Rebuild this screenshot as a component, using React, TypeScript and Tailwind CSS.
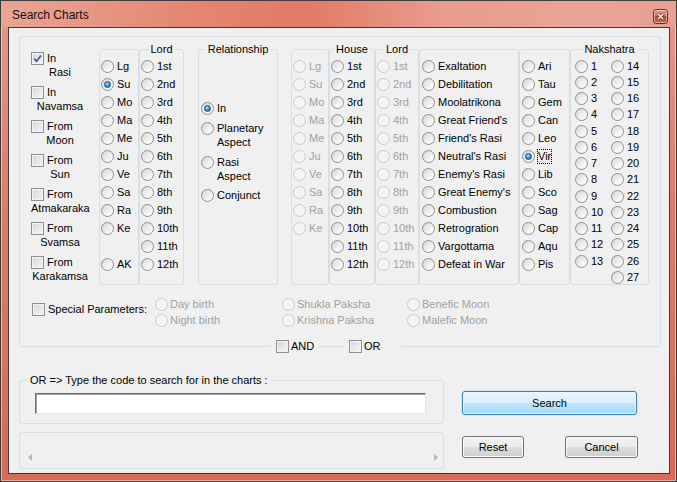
import type { ReactNode } from 'react';

const PLANETS = ['Lg', 'Su', 'Mo', 'Ma', 'Me', 'Ju', 'Ve', 'Sa', 'Ra', 'Ke'];
const ORDINALS = ['1st', '2nd', '3rd', '4th', '5th', '6th', '7th', '8th', '9th', '10th', '11th', '12th'];
const CONDITIONS = [
  'Exaltation',
  'Debilitation',
  'Moolatrikona',
  "Great Friend's",
  "Friend's Rasi",
  "Neutral's Rasi",
  "Enemy's Rasi",
  "Great Enemy's",
  'Combustion',
  'Retrogration',
  'Vargottama',
  'Defeat in War',
];
const SIGNS = ['Ari', 'Tau', 'Gem', 'Can', 'Leo', 'Vir', 'Lib', 'Sco', 'Sag', 'Cap', 'Aqu', 'Pis'];
const NAK_LEFT = Array.from({ length: 13 }, (_, i) => String(i + 1));
const NAK_RIGHT = Array.from({ length: 14 }, (_, i) => String(i + 14));

const CHART_CHECKS: { first: string; second: string; checked?: boolean }[] = [
  { first: 'In', second: 'Rasi', checked: true },
  { first: 'In', second: 'Navamsa' },
  { first: 'From', second: 'Moon' },
  { first: 'From', second: 'Sun' },
  { first: 'From', second: 'Atmakaraka' },
  { first: 'From', second: 'Svamsa' },
  { first: 'From', second: 'Karakamsa' },
];

function Radio({ checked = false, disabled = false }: { checked?: boolean; disabled?: boolean }) {
  return (
    <span
      className={`flex h-[13px] w-[13px] shrink-0 items-center justify-center rounded-full border ${
        disabled
          ? 'border-[#cacaca] bg-[#f4f4f4]'
          : 'border-[#8e8f8f] bg-[linear-gradient(135deg,#d6d6d6,#f4f4f4_65%,#ffffff)]'
      }`}
    >
      {checked && (
        <span className="h-[7px] w-[7px] rounded-full border border-[#1c4c7e] bg-[radial-gradient(circle_at_40%_35%,#b4e2fb,#3489cf_55%,#1a5592)]" />
      )}
    </span>
  );
}

function Check({ checked = false }: { checked?: boolean }) {
  return (
    <span className="flex h-[13px] w-[13px] shrink-0 items-center justify-center border border-[#8e8f8f] bg-[linear-gradient(135deg,#d2d6dc,#f6f6f6)] shadow-[inset_0_0_0_1px_#f4f4f4]">
      {checked && (
        <svg width="9" height="9" viewBox="0 0 9 9">
          <path d="M1.2 4.6 L3.6 7.2 L8 1.4" stroke="#3b5a96" strokeWidth="1.7" fill="none" />
        </svg>
      )}
    </span>
  );
}

function RadioRow({
  label,
  checked,
  disabled,
  focused,
  rowClass = 'h-[18px] gap-[3px]',
}: {
  label: string;
  checked?: boolean;
  disabled?: boolean;
  focused?: boolean;
  rowClass?: string;
}) {
  return (
    <div className={`flex items-center whitespace-nowrap ${rowClass}`}>
      <Radio checked={checked} disabled={disabled} />
      {focused ? (
        <span className="-ml-px border border-dotted border-black px-0 leading-[13px]">{label}</span>
      ) : (
        <span className={disabled ? 'text-[#a0a0a0]' : ''}>{label}</span>
      )}
    </div>
  );
}

/** Windows-style group box; the title sits over the top border. */
function GroupBox({
  title,
  align = 'center',
  className = '',
  children,
}: {
  title?: string;
  align?: 'center' | 'left';
  className?: string;
  children?: ReactNode;
}) {
  return (
    <div className={`relative shrink-0 rounded-[3px] border border-[#d5dfe5] ${className}`}>
      {title && (
        <span
          className={`absolute -top-[7px] whitespace-nowrap bg-[#f0f0f0] px-[2px] leading-[13px] ${
            align === 'center' ? 'left-1/2 -translate-x-1/2' : 'left-[8px]'
          }`}
        >
          {title}
        </span>
      )}
      {children}
    </div>
  );
}

function WinButton({ label, className = '', primary = false }: { label: string; className?: string; primary?: boolean }) {
  return (
    <button
      className={`flex items-center justify-center rounded-[3px] border leading-[13px] ${
        primary
          ? 'border-[#3c7fb1] bg-[linear-gradient(#eaf6fd,#d9f0fc_50%,#bee6fd_50%,#a7d9f5)] shadow-[inset_0_0_0_1px_#e8f7ff,0_0_2px_#8fd0f5]'
          : 'border-[#707070] bg-[linear-gradient(#f2f2f2,#ebebeb_50%,#dddddd_50%,#cfcfcf)] shadow-[inset_0_0_0_1px_#fbfbfb]'
      } ${className}`}
    >
      {label}
    </button>
  );
}

function Arrow({ dir }: { dir: 'left' | 'right' }) {
  return (
    <svg width="4" height="7" viewBox="0 0 4 7">
      <polygon points={dir === 'left' ? '4,0 0,3.5 4,7' : '0,0 4,3.5 0,7'} fill="#b5b5b5" />
    </svg>
  );
}

export default function App() {
  return (
    <div className="flex h-[482px] w-[677px] flex-col border border-[#3d3d3d] bg-[linear-gradient(180deg,#e59a8b,#dc7b68_45%,#d86a56)] font-['Liberation_Sans',Arial,sans-serif] text-[11px] leading-[13px] text-black shadow-[inset_0_0_0_1px_rgba(255,255,255,0.45)]">
      {/* title bar */}
      <div className="flex h-[26px] shrink-0 items-start bg-[linear-gradient(90deg,#e9a596_0%,#e48470_30%,#e27a66_45%,#e99b8c_65%,#eaa495_85%,#e8a092_100%)]">
        <span className="ml-[11px] mt-[7px] text-[12px] leading-[15px] text-[#111]">Search Charts</span>
        <div className="ml-auto mr-[8px] mt-[8px] flex h-[15px] w-[15px] items-center justify-center rounded-[3px] border border-[#6e3127] bg-[linear-gradient(#e39a8a,#cf6c57_50%,#b84a35_50%,#c9654f)] shadow-[inset_0_0_0_1px_rgba(255,255,255,0.45)]">
          <svg width="9" height="9" viewBox="0 0 9 9">
            <path d="M2 2 L7 7 M7 2 L2 7" stroke="#5a2018" strokeWidth="2.6" />
            <path d="M2 2 L7 7 M7 2 L2 7" stroke="#ffffff" strokeWidth="1.6" />
          </svg>
        </div>
      </div>

      {/* client area */}
      <div className="ml-[7px] mr-[6px] flex h-[447px] flex-col border border-[#3b3b3b] bg-[#f0f0f0] pl-[10px] pt-[8px]">
        <div className="flex h-[311px] w-[642px] shrink-0 flex-col rounded-[3px] border border-[#d5dfe5]">
          <div className="flex items-start pl-[11px] pt-[12px]">
            {/* charts */}
            <div className="w-[68px] shrink-0 pt-[3px]">
              {CHART_CHECKS.map((c) => (
                <div key={c.second} className="mb-[7px] w-[58px]">
                  <div className="flex h-[13px] items-center gap-[3px]">
                    <Check checked={c.checked} />
                    <span>{c.first}</span>
                  </div>
                  <div className="h-[14px] text-center leading-[14px]">{c.second}</div>
                </div>
              ))}
            </div>

            <GroupBox className="h-[236px] w-[40px] pl-px pt-[7px]">
              {PLANETS.map((p) => (
                <RadioRow key={p} label={p} checked={p === 'Su'} />
              ))}
              <div className="h-[18px]" />
              <RadioRow label="AK" />
            </GroupBox>
            <GroupBox title="Lord" className="h-[236px] w-[45px] pl-px pt-[7px]">
              {ORDINALS.map((o) => (
                <RadioRow key={o} label={o} />
              ))}
            </GroupBox>

            <GroupBox title="Relationship" className="ml-[14px] h-[236px] w-[80px] pl-[2px] pt-[51px]">
              <div className="flex h-[14px] items-center gap-[3px]">
                <Radio checked />
                <span>In</span>
              </div>
              <div className="mt-[6px] flex items-start gap-[3px]">
                <span className="mt-px">
                  <Radio />
                </span>
                <div className="leading-[14px]">
                  <div>Planetary</div>
                  <div>Aspect</div>
                </div>
              </div>
              <div className="mt-[6px] flex items-start gap-[3px]">
                <span className="mt-px">
                  <Radio />
                </span>
                <div className="leading-[14px]">
                  <div>Rasi</div>
                  <div>Aspect</div>
                </div>
              </div>
              <div className="mt-[5px] flex h-[14px] items-center gap-[3px]">
                <Radio />
                <span>Conjunct</span>
              </div>
            </GroupBox>

            <GroupBox className="ml-[13px] h-[236px] w-[38px] pl-px pt-[7px]">
              {PLANETS.map((p) => (
                <RadioRow key={p} label={p} disabled />
              ))}
            </GroupBox>
            <GroupBox title="House" className="h-[236px] w-[46px] pl-px pt-[7px]">
              {ORDINALS.map((o) => (
                <RadioRow key={o} label={o} />
              ))}
            </GroupBox>
            <GroupBox title="Lord" className="h-[236px] w-[44px] pl-px pt-[7px]">
              {ORDINALS.map((o) => (
                <RadioRow key={o} label={o} disabled />
              ))}
            </GroupBox>
            <GroupBox className="h-[236px] w-[100px] pl-[2px] pt-[7px]">
              {CONDITIONS.map((c) => (
                <RadioRow key={c} label={c} />
              ))}
            </GroupBox>
            <GroupBox className="h-[236px] w-[51px] pl-[2px] pt-[7px]">
              {SIGNS.map((s) => (
                <RadioRow key={s} label={s} checked={s === 'Vir'} focused={s === 'Vir'} />
              ))}
            </GroupBox>
            <GroupBox title="Nakshatra" className="flex h-[236px] w-[79px] pl-[4px] pt-[8px]">
              <div className="w-[36px]">
                {NAK_LEFT.map((n) => (
                  <RadioRow key={n} label={n} rowClass="h-[16.25px] gap-[3px]" />
                ))}
              </div>
              <div>
                {NAK_RIGHT.map((n) => (
                  <RadioRow key={n} label={n} rowClass="h-[16.25px] gap-[3px]" />
                ))}
              </div>
            </GroupBox>
          </div>

          {/* special parameters */}
          <div className="mt-[6px] flex items-start pl-[12px]">
            <div className="flex w-[123px] items-start gap-[3px] pt-[7px]">
              <Check />
              <span>Special Parameters:</span>
            </div>
            <div className="w-[127px]">
              <RadioRow label="Day birth" disabled rowClass="h-[16px] gap-[2px]" />
              <RadioRow label="Night birth" disabled rowClass="h-[16px] gap-[2px]" />
            </div>
            <div className="w-[125px]">
              <RadioRow label="Shukla Paksha" disabled rowClass="h-[16px] gap-[2px]" />
              <RadioRow label="Krishna Paksha" disabled rowClass="h-[16px] gap-[2px]" />
            </div>
            <div>
              <RadioRow label="Benefic Moon" disabled rowClass="h-[16px] gap-[2px]" />
              <RadioRow label="Malefic Moon" disabled rowClass="h-[16px] gap-[2px]" />
            </div>
          </div>
        </div>

        {/* AND / OR sit on the bottom edge of the main box */}
        <div className="-mt-[7px] flex h-[13px] shrink-0 pl-[251px]">
          <div className="flex w-[48px] items-center gap-[2px] bg-[#f0f0f0] pl-[6px]">
            <Check />
            <span>AND</span>
          </div>
          <div className="ml-[27px] flex w-[56px] items-center gap-[2px] bg-[#f0f0f0] pl-[4px]">
            <Check />
            <span>OR</span>
          </div>
        </div>

        <div className="mt-[27px] flex items-start">
          <div className="w-[425px] shrink-0">
            <GroupBox title="OR => Type the code to search for in the charts :" align="left" className="h-[44px] pl-[15px] pt-[12px]">
              <div className="h-[21px] w-[391px] border border-t-[#6e6e6e] border-l-[#6e6e6e] border-b-[#e5e5e5] border-r-[#e5e5e5] bg-white shadow-[inset_1px_1px_0_#a0a0a0]" />
            </GroupBox>
            <GroupBox className="mt-[8px] flex h-[37px] items-end justify-between pb-[7px] pl-[8px] pr-[5px]">
              <Arrow dir="left" />
              <Arrow dir="right" />
            </GroupBox>
          </div>

          <div className="ml-[18px] mt-[11px] flex flex-col">
            <WinButton label="Search" primary className="h-[24px] w-[175px]" />
            <div className="mt-[21px] flex gap-[41px]">
              <WinButton label="Reset" className="h-[22px] w-[62px]" />
              <WinButton label="Cancel" className="h-[22px] w-[73px]" />
            </div>
          </div>
        </div>
      </div>
    </div>
  );
}
